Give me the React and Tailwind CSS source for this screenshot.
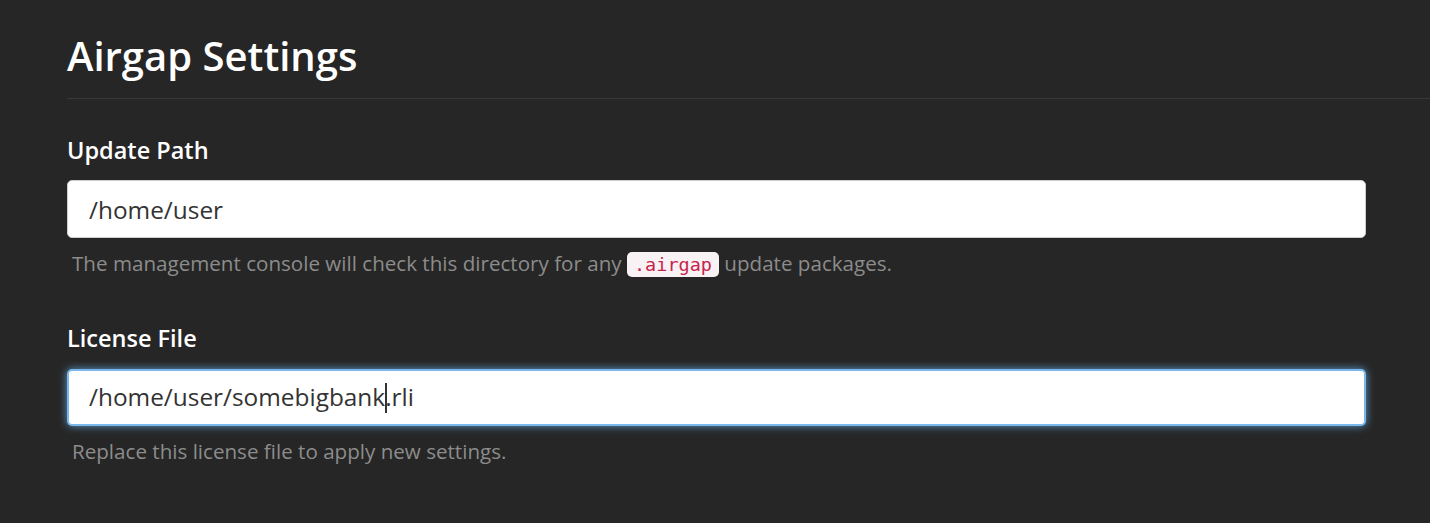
import React from "react";

export default function App() {
  return (
    <div className="w-[1430px] h-[523px] overflow-hidden bg-[#262626] font-['Open_Sans',sans-serif]">
      <div className="pl-[67px]">
        <div className="border-b border-[#383838] pt-[30px] pb-[16px]">
          <h1 className="text-[40px] leading-[52px] font-semibold text-white">Airgap Settings</h1>
        </div>
        <div className="w-[1299px] pt-[36px]">
          <div className="text-[23.5px] leading-[30px] font-semibold text-white">Update Path</div>
          <input
            readOnly
            value="/home/user"
            className="mt-[15px] block w-full h-[58px] rounded-[5px] bg-white px-[21px] text-[24.4px] text-[#333] outline-none border border-[#ccc]"
          />
          <p className="mt-[11px] pl-[5px] text-[20.6px] leading-[28px] text-[#8c8c8c]">
            The management console will check this directory for any{" "}
            <code className="rounded-[5px] bg-[#f9f2f4] px-[7px] py-[2px] font-['DejaVu_Sans_Mono',monospace] text-[18.5px] text-[#c7254e]">.airgap</code>{" "}
            update packages.
          </p>
          <div className="mt-[44px] text-[23.5px] leading-[30px] font-semibold text-white">License File</div>
          <div className="mt-[16px] flex items-center w-full h-[57px] rounded-[5px] bg-white px-[21px] text-[24.4px] text-[#333] border-2 border-[#7ab8ec] shadow-[0_0_9px_rgba(102,175,233,0.85)]">
            <span className="-ml-px">/home/user/somebigbank</span>
            <span className="inline-block w-[1.5px] h-[30px] bg-[#333] -mr-[1.5px]"></span>
            <span>.rli</span>
          </div>
          <p className="mt-[11px] pl-[5px] text-[20.6px] leading-[28px] text-[#8c8c8c]">
            Replace this license file to apply new settings.
          </p>
        </div>
      </div>
    </div>
  );
}
